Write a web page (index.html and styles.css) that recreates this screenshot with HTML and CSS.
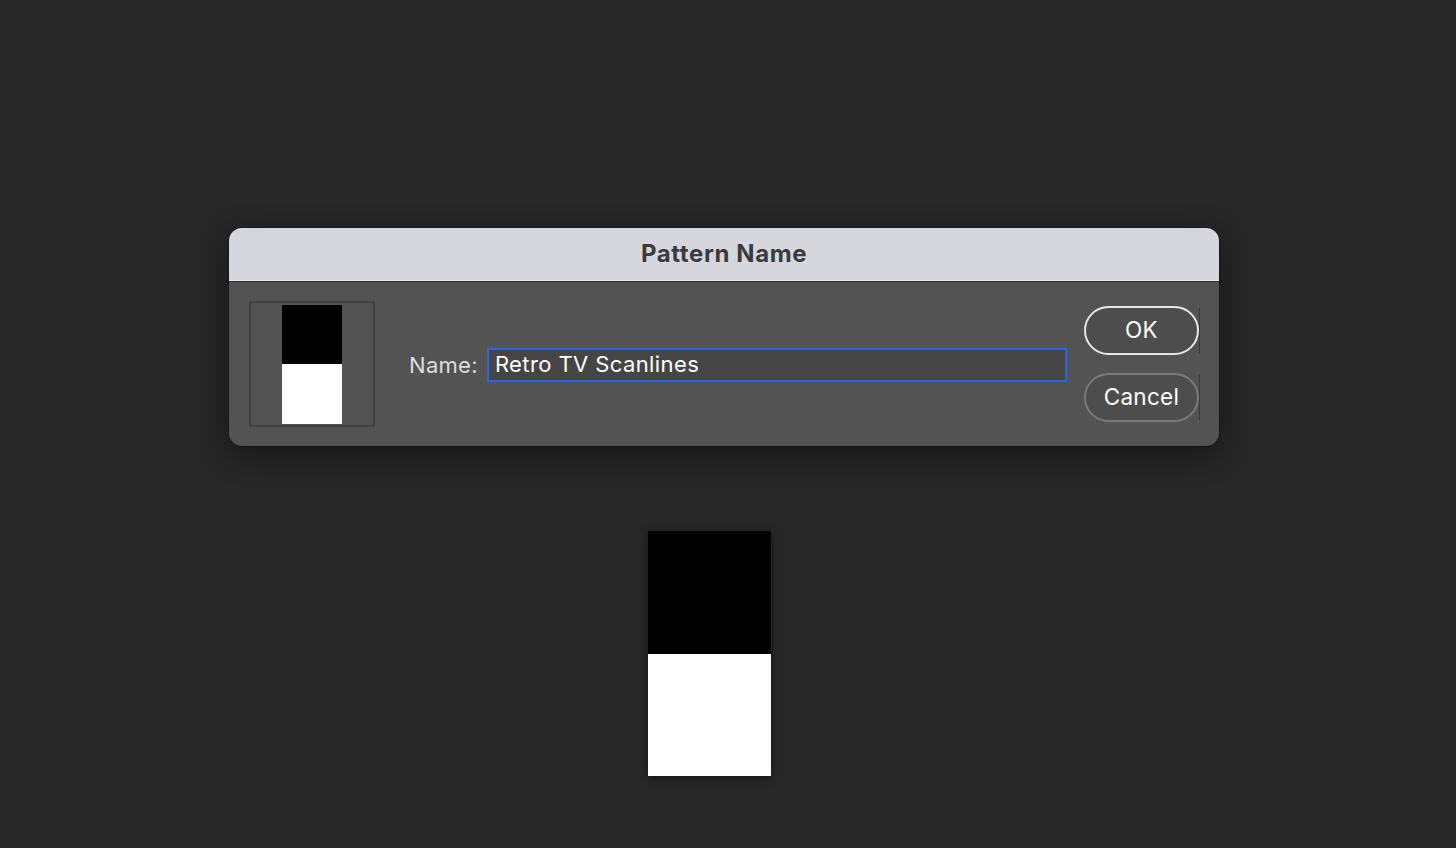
FILE: index.html
```html
<!DOCTYPE html>
<html lang="en">
<head>
    <meta charset="UTF-8">
    <title>Pattern Name</title>
    <link rel="stylesheet" href="styles.css">
</head>
<body>
    <div class="dialog">
        <div class="dialog-title">Pattern Name</div>
        <div class="dialog-body">
            <div class="preview">
                <div class="swatch small">
                    <div class="swatch-black"></div>
                    <div class="swatch-white"></div>
                </div>
            </div>
            <div class="name-row">
                <label class="name-label" for="patternName">Name:</label>
                <input class="name-input" id="patternName" type="text" value="Retro TV Scanlines">
            </div>
            <div class="buttons">
                <button class="btn btn-ok">OK</button>
                <button class="btn btn-cancel">Cancel</button>
            </div>
        </div>
    </div>

    <div class="swatch large">
        <div class="swatch-black"></div>
        <div class="swatch-white"></div>
    </div>
</body>
</html>
```

FILE: styles.css
```css
body {
    margin: 0;
    height: 848px;
    background-color: #272727;
    font-family: Inter, "Open Sans", sans-serif;
    display: flex;
    flex-direction: column;
    align-items: flex-start;
    overflow: hidden;
}
.dialog {
    margin-top: 228px;
    margin-left: 229px;
    width: 990px;
    border-radius: 13px;
    overflow: hidden;
    background-color: #535353;
    box-shadow: 0 8px 30px rgba(0,0,0,0.45), 0 0 0 1px rgba(0,0,0,0.25);
}
.dialog-title {
    height: 53px;
    box-sizing: border-box;
    padding-bottom: 2px;
    background-color: #d6d7dc;
    border-bottom: 1px solid #ececee;
    box-shadow: 0 1px 0 #2f2f2f;
    color: #3b3b3d;
    font-size: 24px;
    font-weight: 700;
    letter-spacing: 0.6px;
    display: flex;
    align-items: center;
    justify-content: center;
}
.dialog-body {
    display: flex;
    align-items: center;
    padding: 20px 20px 19px 20px;
}
.preview {
    width: 126px;
    height: 126px;
    box-sizing: border-box;
    border: 2px solid #414141;
    display: flex;
    justify-content: center;
    align-items: center;
    flex-shrink: 0;
}
.swatch {
    display: flex;
    flex-direction: column;
}
.swatch-black {
    flex: 1;
    background-color: #000;
}
.swatch-white {
    flex: 1;
    background-color: #fff;
}
.swatch.small {
    width: 60px;
    height: 119px;
}
.name-row {
    flex: 1;
    display: flex;
    align-items: center;
    margin: 1px 17px 0 34px;
}
.name-label {
    color: #dcdcdc;
    font-size: 22px;
    letter-spacing: 0.3px;
    margin-right: 9px;
}
.name-input {
    flex: 1;
    min-width: 0;
    height: 34px;
    box-sizing: border-box;
    border: 2px solid #2c63e2;
    background-color: #454545;
    color: #ffffff;
    font-family: inherit;
    font-size: 22px;
    letter-spacing: 0.4px;
    padding: 0 0 1px 6px;
    outline: none;
}
.buttons {
    display: flex;
    flex-direction: column;
    gap: 18px;
}
.btn {
    position: relative;
    width: 115px;
    height: 49px;
    border-radius: 25px;
    background-color: #4d4d4d;
    color: #fff;
    font-family: inherit;
    font-size: 22.5px;
    letter-spacing: 0.3px;
    box-sizing: border-box;
    padding: 0 0 2px 0;
}
.btn::after {
    content: "";
    position: absolute;
    right: -3px;
    top: 0;
    bottom: 0;
    width: 1px;
    background-color: #3a3a3a;
}
.btn-ok {
    border: 2px solid #e6e6e6;
}
.btn-cancel {
    border: 2px solid #7a7a7a;
}
.swatch.large {
    margin-top: 85px;
    margin-left: 648px;
    width: 123px;
    height: 245px;
    box-shadow: 0 2px 8px rgba(0,0,0,0.5);
}
```
